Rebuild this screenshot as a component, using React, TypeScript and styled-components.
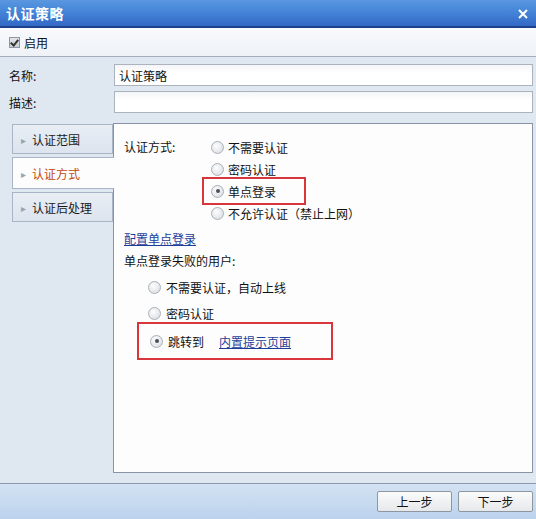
import styled, { createGlobalStyle } from "styled-components";

const GlobalStyle = createGlobalStyle`
  html, body {
    margin: 0;
    padding: 0;
    background: #dfe7f1;
  }
  body {
    font-family: "Noto Sans CJK SC", "DejaVu Sans", sans-serif;
    font-size: 12px;
    color: #111;
  }
`;

const tabs = ["认证范围", "认证方式", "认证后处理"];
const methods = ["不需要认证", "密码认证", "单点登录", "不允许认证（禁止上网）"];

export default function App() {
  return (
    <>
      <GlobalStyle />
      <Window>
        <TitleBar>
          <Title>认证策略</Title>
          <Close>
            <svg width="10" height="10" viewBox="0 0 10 10">
              <path d="M1 1 L9 9 M9 1 L1 9" stroke="#fff" strokeWidth="2" />
            </svg>
          </Close>
        </TitleBar>

        <Toolbar>
          <CheckBox />
          <span>启用</span>
        </Toolbar>

        <Body>
          <FormRow>
            <Label>名称:</Label>
            <Input defaultValue="认证策略" />
          </FormRow>
          <FormRow>
            <Label>描述:</Label>
            <Input />
          </FormRow>

          <Main>
            <TabList>
              {tabs.map((t, i) => (
                <Tab key={t} $active={i === 1}>
                  <Arrow>▸</Arrow>
                  {t}
                </Tab>
              ))}
            </TabList>

            <Panel>
              <MethodBlock>
                <FieldLabel>认证方式:</FieldLabel>
                <RadioColumn>
                  {methods.map((m, i) => (
                    <RadioRow key={m} $highlight={i === 2}>
                      <Radio $checked={i === 2} />
                      {m}
                    </RadioRow>
                  ))}
                </RadioColumn>
              </MethodBlock>

              <LinkText>配置单点登录</LinkText>
              <SubTitle>单点登录失败的用户:</SubTitle>

              <FailList>
                <FailRow>
                  <Radio />
                  不需要认证，自动上线
                </FailRow>
                <FailRow>
                  <Radio />
                  密码认证
                </FailRow>
                <FailRowBoxed>
                  <Radio $checked />
                  跳转到
                  <PageLink>内置提示页面</PageLink>
                </FailRowBoxed>
              </FailList>
            </Panel>
          </Main>
        </Body>

        <Footer>
          <Button>上一步</Button>
          <Button>下一步</Button>
        </Footer>
      </Window>
    </>
  );
}

const Window = styled.div`
  width: 536px;
  height: 519px;
  display: flex;
  flex-direction: column;
  overflow: hidden;
`;

const TitleBar = styled.div`
  height: 26px;
  flex: none;
  display: flex;
  align-items: center;
  justify-content: space-between;
  padding: 0 8px 0 6px;
  background: linear-gradient(#5a97e0 0%, #4585d8 45%, #3268c4 100%);
  border-bottom: 2px solid #1d3f8c;
`;

const Title = styled.div`
  color: #fff;
  font-weight: bold;
  font-size: 14px;
  letter-spacing: 0.5px;
`;

const Close = styled.div`
  display: flex;
  align-items: center;
  padding-top: 1px;
`;

const Toolbar = styled.div`
  height: 28px;
  flex: none;
  display: flex;
  align-items: center;
  gap: 4px;
  padding-left: 9px;
  background: linear-gradient(#f8fafd, #eef2f7);
  border-bottom: 1px solid #a2adbb;
`;

const CheckBox = styled.span`
  width: 9px;
  height: 9px;
  border: 1px solid #8c97a3;
  background: linear-gradient(#e2e5e9, #c9ced4);
  position: relative;
  &::after {
    content: "";
    position: absolute;
    left: 2px;
    top: 0;
    width: 3px;
    height: 6px;
    border: solid #333;
    border-width: 0 2px 2px 0;
    transform: rotate(40deg);
  }
`;

const Body = styled.div`
  flex: 1;
  display: flex;
  flex-direction: column;
  gap: 5px;
  padding: 7px 3px 10px 0;
  background: #dfe7f1;
  border-bottom: 1px solid #8c99ab;
`;

const FormRow = styled.div`
  display: flex;
  align-items: center;
`;

const Label = styled.div`
  width: 114px;
  padding-left: 9px;
  box-sizing: border-box;
`;

const Input = styled.input`
  flex: 1;
  height: 22px;
  box-sizing: border-box;
  margin: 0;
  padding: 0 4px;
  border: 1px solid #aab3be;
  background: linear-gradient(#f4f5f7, #fff 40%);
  font-family: inherit;
  font-size: 12px;
  color: #111;
  outline: none;
`;

const Main = styled.div`
  flex: 1;
  display: flex;
  margin-top: 5px;
  padding-left: 12px;
`;

const TabList = styled.div`
  width: 101px;
  display: flex;
  flex-direction: column;
  gap: 3px;
  padding-top: 1px;
  position: relative;
  z-index: 1;
`;

const Tab = styled.div<{ $active?: boolean }>`
  height: ${(p) => (p.$active ? 32 : 30)}px;
  display: flex;
  align-items: center;
  gap: 6px;
  padding-left: 8px;
  box-sizing: border-box;
  border: 1px solid #a8b5c7;
  border-right: ${(p) => (p.$active ? "none" : "1px solid #a8b5c7")};
  margin-right: ${(p) => (p.$active ? -1 : 0)}px;
  background: ${(p) =>
    p.$active ? "#fdfdfd" : "linear-gradient(#e9eef5, #dce4ee)"};
  color: ${(p) => (p.$active ? "#c4480f" : "#1a1a1a")};
`;

const Arrow = styled.span`
  color: #9aa4b0;
  font-size: 10px;
`;

const Panel = styled.div`
  flex: 1;
  background: #fdfdfd;
  border: 1px solid #8794a6;
  padding: 14px 0 0 10px;
  display: flex;
  flex-direction: column;
`;

const MethodBlock = styled.div`
  display: flex;
`;

const FieldLabel = styled.div`
  width: 88px;
  line-height: 18px;
`;

const RadioColumn = styled.div`
  display: flex;
  flex-direction: column;
  gap: 4px;
`;

const RadioRow = styled.div<{ $highlight?: boolean }>`
  display: flex;
  align-items: center;
  gap: 4px;
  height: 18px;
  margin-left: -5px;
  padding-left: 4px;
  width: ${(p) => (p.$highlight ? "90px" : "auto")};
  outline: ${(p) => (p.$highlight ? "2px solid #d9363b" : "none")};
  outline-offset: 3px;
`;

const Radio = styled.span<{ $checked?: boolean }>`
  width: 11px;
  height: 11px;
  flex: none;
  border-radius: 50%;
  border: 1px solid #a9b0b8;
  background: radial-gradient(circle at 40% 35%, #fdfdfd, #d5d9de);
  display: flex;
  align-items: center;
  justify-content: center;
  &::after {
    content: "";
    width: 4px;
    height: 4px;
    border-radius: 50%;
    background: ${(p) => (p.$checked ? "#4a4f58" : "transparent")};
  }
`;

const LinkText = styled.a`
  margin-top: 8px;
  color: #1d3d9a;
  text-decoration: underline;
  line-height: 18px;
  align-self: flex-start;
`;

const SubTitle = styled.div`
  margin-top: 4px;
  line-height: 18px;
`;

const FailList = styled.div`
  display: flex;
  flex-direction: column;
  gap: 8px;
  margin-top: 8px;
  padding-left: 24px;
`;

const FailRow = styled.div`
  display: flex;
  align-items: center;
  gap: 5px;
  height: 18px;
`;

const FailRowBoxed = styled(FailRow)`
  width: 170px;
  margin-top: -8px;
  margin-left: -11px;
  padding: 8px 11px;
  border: 2px solid #d9363b;
`;

const PageLink = styled.a`
  margin-left: 10px;
  color: #1d3d9a;
  text-decoration: underline;
`;

const Footer = styled.div`
  height: 35px;
  flex: none;
  display: flex;
  align-items: center;
  justify-content: flex-end;
  gap: 6px;
  padding-right: 3px;
  background: linear-gradient(#d3e2f3, #bcd3ed);
`;

const Button = styled.button`
  width: 75px;
  height: 21px;
  margin: 0;
  padding: 0;
  border: 1px solid #8e969f;
  border-radius: 2px;
  background: linear-gradient(#fbfbfb, #e6e8eb);
  font-family: inherit;
  font-size: 12px;
  color: #111;
`;
